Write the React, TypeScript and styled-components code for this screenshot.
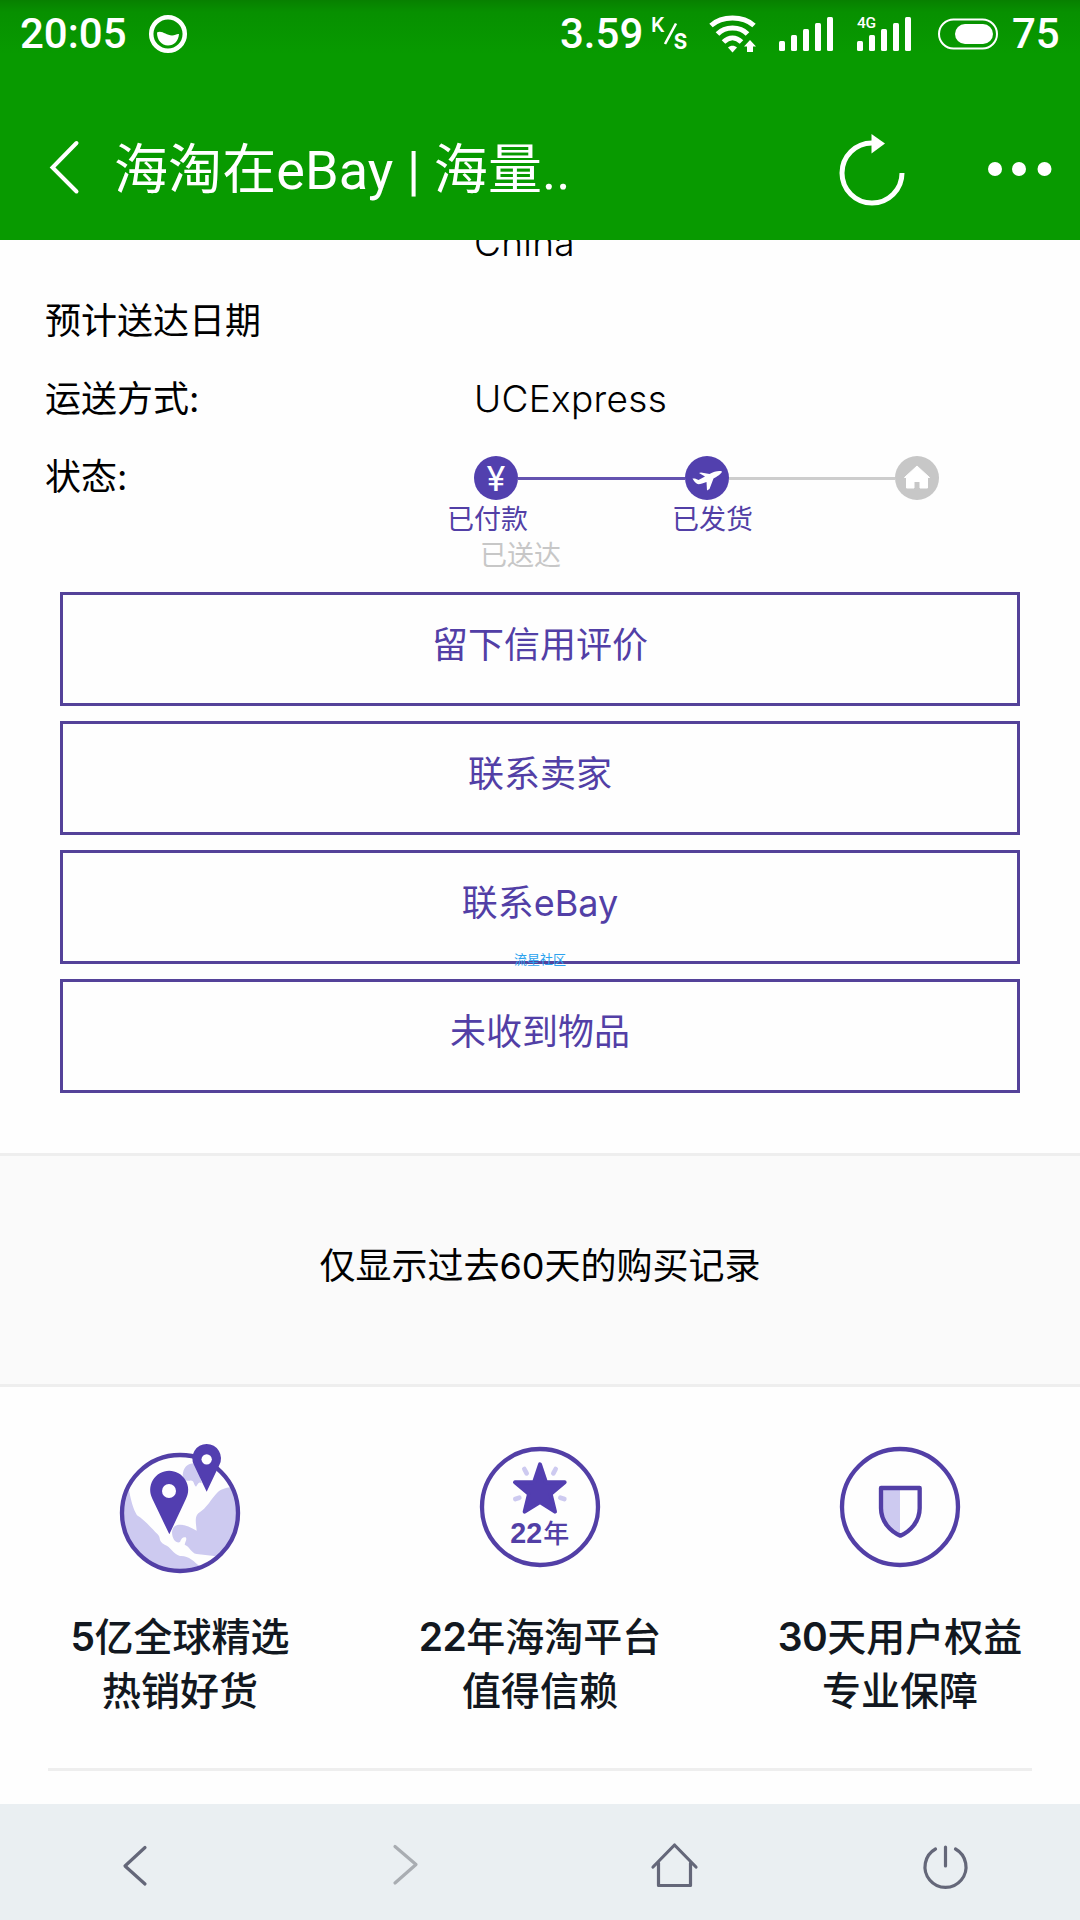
import React from 'react';
import styled, { createGlobalStyle } from 'styled-components';

const purple = '#523fa6';
const lilac = '#cdcaf0';
const cjk = "'Noto Sans CJK SC', sans-serif";

const GlobalStyle = createGlobalStyle`
  * {
    box-sizing: border-box;
  }

  body {
    margin: 0;
    background: #fefefe;
    color: #000;
    font-family: Inter, ${cjk};
  }
`;

const Screen = styled.div`
  position: relative;
  display: flex;
  flex-direction: column;
  width: 1080px;
  height: 1920px;
  overflow: hidden;
`;

const Header = styled.header`
  flex: none;
  height: 240px;
  color: #fff;
  font-family: Roboto, ${cjk};
  background: linear-gradient(#078000 0, #079000 12px, #089a00 54px);
`;

const StatusBar = styled.div`
  display: flex;
  align-items: center;
  height: 67px;
  padding: 0 20px;
  font-size: 42px;
  font-weight: 500;
  line-height: 67px;

  svg {
    flex: none;
    overflow: visible;
  }
`;

const Clock = styled.span`
  width: 128px;
`;

const Speed = styled.span`
  width: 92px;
  margin-left: auto;
`;

const Indicators = styled.div`
  display: flex;
  align-items: center;
  gap: 22px;
  margin: 0 25px 0 19px;
`;

const Level = styled.span`
  width: 48px;
  margin-left: 14px;
`;

const NavBar = styled.div`
  display: flex;
  align-items: center;
  height: 173px;
  padding: 27px 26px 0 46px;
`;

const Title = styled.h1`
  flex: 1;
  margin: 7px 0 0 30px;
  font-size: 54px;
  font-weight: 400;
  line-height: 64px;
  letter-spacing: 0.1px;
  white-space: pre;
`;

const NavActions = styled.div`
  display: flex;
  align-items: center;
  gap: 79px;
  padding-top: 4px;
`;

const Details = styled.main`
  flex: none;
  height: 913px;
  overflow: hidden;
`;

const Row = styled.div<{ $clipped?: boolean }>`
  display: grid;
  grid-template-columns: 429px 1fr;
  align-items: center;
  height: 78px;
  margin-top: ${({ $clipped }) => ($clipped ? '-37px' : '0')};
  padding: 1px 0 0 45px;
  font-size: 36px;
  font-weight: 400;
  line-height: 44px;
`;

const Value = styled.span`
  font-size: 37px;
  font-weight: 350;
  letter-spacing: 0.3px;
`;

const Track = styled.div`
  display: flex;
  align-items: center;
  width: 465px;
  padding-top: 3px;
`;

const Step = styled.div<{ $done?: boolean }>`
  display: flex;
  align-items: center;
  justify-content: center;
  flex: none;
  width: 44px;
  height: 44px;
  border-radius: 50%;
  background: ${({ $done }) => ($done ? '#5240ae' : '#c7c7c7')};
  color: #fff;
  font-family: Roboto, sans-serif;
  font-size: 35px;
  font-weight: 400;
`;

const Yen = styled.span`
  padding-top: 4px;
`;

const Line = styled.div<{ $done?: boolean }>`
  flex: 1;
  height: 3px;
  background: ${({ $done }) => ($done ? '#6453b0' : '#cdcdcd')};
`;

const StepLabels = styled.div`
  display: flex;
  flex-wrap: wrap;
  align-content: flex-start;
  width: 320px;
  height: 90px;
  margin: -13px 0 0 447px;
  font-size: 27px;
  font-weight: 400;
  line-height: 36px;
`;

const StepLabel = styled.span<{ $pending?: boolean }>`
  width: ${({ $pending }) => ($pending ? '100%' : '225px')};
  padding-left: ${({ $pending }) => ($pending ? '33px' : '0')};
  color: ${({ $pending }) => ($pending ? '#c7c7c7' : purple)};

  &:nth-child(2) {
    width: 95px;
  }
`;

const Actions = styled.div`
  display: flex;
  flex-direction: column;
  gap: 15px;
  padding: 0 60px;
`;

const ActionButton = styled.button`
  height: 114px;
  padding: 0 0 14px;
  border: 3px solid #544299;
  background: transparent;
  color: ${purple};
  font-family: Inter, ${cjk};
  font-size: 36px;
  font-weight: 400;
`;

const Watermark = styled.span`
  position: absolute;
  top: 949px;
  left: 514px;
  font-family: ${cjk};
  font-size: 13px;
  line-height: 20px;
  color: #2ba2ee;
`;

const Notice = styled.section`
  display: flex;
  flex: none;
  align-items: center;
  justify-content: center;
  height: 234px;
  padding-bottom: 14px;
  border: solid #eee;
  border-width: 3px 0;
  background: #fafafa;
  font-size: 36px;
  font-weight: 400;
`;

const Features = styled.section`
  display: grid;
  flex: none;
  grid-template-columns: repeat(3, 360px);
  height: 381px;
  padding-top: 54px;
`;

const Feature = styled.div`
  display: flex;
  flex-direction: column;
  align-items: center;
  color: #121820;
  font-size: 39px;
  font-weight: 500;
  line-height: 54px;

  svg {
    margin-bottom: 36px;
  }

  b {
    font-weight: 600;
    letter-spacing: -0.5px;
  }
`;

const Divider = styled.hr`
  flex: none;
  width: 984px;
  height: 3px;
  margin: 0 auto 33px;
  border: 0;
  background: #eee;
`;

const TabBar = styled.nav`
  display: grid;
  flex: 1;
  grid-template-columns: repeat(4, 1fr);
  align-items: center;
  justify-items: center;
  padding-top: 10px;
  background: #eaeff2;
`;

const SignalBars: React.FC<{ label?: string }> = ({ label }) => (
  <svg width="56" height="40" viewBox="0 0 56 40" fill="#fff">
    {[0, 1, 2, 3, 4].map((i) => (
      <rect key={i} x={i * 12} y={27 - i * 6} width="6" height={10 + i * 6} rx="1.5" />
    ))}
    {label && (
      <text x="0" y="14" fontFamily="Roboto" fontSize="15.5" fontWeight="500" textLength="19">
        {label}
      </text>
    )}
  </svg>
);

const WaterIcon = () => (
  <svg width="40" height="40" viewBox="0 0 40 40">
    <circle cx="20" cy="20" r="16.8" fill="none" stroke="#fff" strokeWidth="4.5" />
    <path d="M9 18.5C14 16 18 21.5 24 21.5C27 21.5 29 19.5 31 20C30.5 27 26 31.5 20 31.5C13.5 31.5 9 26 9 18.5Z" fill="#fff" />
  </svg>
);

const SpeedUnit = () => (
  <svg width="38" height="40" viewBox="0 0 38 40" fill="#fff">
    <text x="-1" y="18" fontFamily="Roboto" fontSize="21" fontWeight="500">K</text>
    <path d="M13 30L24 9.500" stroke="#fff" strokeWidth="2.600" />
    <text x="21.500" y="35" fontFamily="Roboto" fontSize="29" fontWeight="500" textLength="14" lengthAdjust="spacingAndGlyphs">s</text>
  </svg>
);

const WifiIcon = () => (
  <svg width="48" height="40" viewBox="0 0 48 40" fill="none" stroke="#fff" strokeWidth="5">
    <path d="M2 11.500C13 1.500 34 1.500 45 11.500" />
    <path d="M8.500 20C16 12 31 12 38.500 20" />
    <path d="M14.500 28C20 22.500 27 22.500 32.500 28" />
    <path d="M19 33.500C21.500 31 25.500 31 28 33.500L23.500 38.500Z" fill="#fff" stroke="none" />
    <path d="M41 26L47 32.500H44V38H38V32.500H35Z" fill="#fff" stroke="none" />
  </svg>
);

const BatteryIcon = () => (
  <svg width="60" height="32" viewBox="0 0 60 32">
    <rect x="1" y="1.500" width="58" height="29" rx="14.500" fill="none" stroke="#fff" strokeWidth="2" />
    <rect x="17" y="6" width="38" height="20" rx="10" fill="#fff" />
  </svg>
);

const BackIcon = () => (
  <svg width="38" height="60" viewBox="0 0 38 60" fill="none" stroke="#fff" strokeWidth="4" strokeLinecap="round">
    <path d="M30.500 6L6.500 30.500L30.500 54.500" />
  </svg>
);

const ReloadIcon = () => (
  <svg width="70" height="86" viewBox="0 0 70 86">
    <path d="M35 17A30 30 0 1 0 65 47" fill="none" stroke="#fff" strokeWidth="5" />
    <path d="M34.500 8L48 17.500L34.500 27.500Z" fill="#fff" />
  </svg>
);

const MoreIcon = () => (
  <svg width="68" height="20" viewBox="0 0 68 20" fill="#fff">
    <circle cx="9" cy="10" r="7" />
    <circle cx="33" cy="10" r="7" />
    <circle cx="58.500" cy="10" r="7" />
  </svg>
);

const PlaneIcon = () => (
  <svg width="44" height="44" viewBox="0 0 44 44" fill="#fff">
    <path d="M37 15.500C36.500 18 32 20.500 28.500 22.500L24.500 33L22 34.500L21.500 26C18 27.500 14 28.500 12.500 28C10.500 27 8 24 7.500 22.500L10 22.500L13.500 24L20 20.500L14 17L16 16.500L24.500 18C29 15.500 34 14.500 37 15.500Z" />
  </svg>
);

const ArrivedIcon = () => (
  <svg width="44" height="44" viewBox="0 0 44 44" fill="#fff" stroke="#fff" strokeLinejoin="round">
    <path d="M22 10L34.500 21.500H32.500V32H25V25.500H19V32H11.500V21.500H9.500Z" />
  </svg>
);

const badge = { width: 122, height: 133, viewBox: '237 63 366 399' };

const GlobeIcon = () => (
  <svg {...badge}>
    <clipPath id="globe">
      <circle cx="420" cy="279" r="170" />
    </clipPath>
    <g clipPath="url(#globe)" fill={lilac}>
      <path d="M240 205H266C272 240 280 268 291 286C315 301 335 325 353 343C365 355 352 362 374 374C392 380 400 402 420 408C445 406 462 424 480 440L420 480L240 450Z" />
      <path d="M600 200C560 201 545 206 533 217C512 238 502 264 475 280C463 292 468 310 470 332C450 320 430 311 412 315C398 318 393 335 398 350C402 364 412 370 420 366C424 356 428 350 437 352C442 358 436 364 434 374C450 380 452 398 470 402L522 408L600 420Z" />
      <path d="M428 165C430 140 445 127 470 130L485 190C475 182 474 193 468 200C460 195 464 180 450 182C440 183 432 184 428 165Z" />
    </g>
    <circle cx="420" cy="279" r="174" fill="none" stroke={purple} strokeWidth="13" />
    <path d="M388 343L337 236A57 57 0 1 1 438 236Z" fill="#523eb0" />
    <circle cx="387" cy="213" r="21" fill="#fff" />
    <path d="M500 215L462 135A43 43 0 1 1 538 135Z" fill="#523eb0" />
    <circle cx="500" cy="118" r="15.500" fill="#fff" />
  </svg>
);

const StarIcon = () => (
  <svg {...badge}>
    <circle cx="420" cy="261" r="174" fill="none" stroke={purple} strokeWidth="13" />
    <path d="M373 147L380 160M467 147L460 160M346 237L358 233M481 233L493 237" stroke={lilac} strokeWidth="14" strokeLinecap="round" />
    <path
      d="M420 133L438 187H494L452 222L465 275L420 246L374 275L387 222L345 187H402Z"
      fill="#523eb0"
      stroke="#523eb0"
      strokeWidth="12"
      strokeLinejoin="round"
    />
    <text x="331" y="370" fontFamily="Liberation Sans" fontSize="86" fontWeight="700" fill={purple}>22</text>
    <text x="430" y="368" fontFamily="Noto Sans CJK SC" fontSize="78" fontWeight="500" fill={purple}>年</text>
  </svg>
);

const ShieldIcon = () => (
  <svg {...badge}>
    <circle cx="420" cy="261" r="174" fill="none" stroke={purple} strokeWidth="13" />
    <path d="M363 204H420V347C392 335 363 305 363 262Z" fill={lilac} />
    <path d="M363 204H479V265C479 305 450 335 421 347C392 335 363 305 363 265Z" fill="none" stroke={purple} strokeWidth="13" strokeLinejoin="round" />
  </svg>
);

const TabIcon = styled.svg.attrs({ width: 50, height: 50, viewBox: '0 0 50 50' })<{ $dim?: boolean }>`
  fill: none;
  stroke: ${({ $dim }) => ($dim ? '#a9adb2' : '#646779')};
  stroke-width: 3.2;
  stroke-linecap: round;
  stroke-linejoin: round;
`;

const actions = ['留下信用评价', '联系卖家', '联系eBay', '未收到物品'];

const features = [
  { icon: <GlobeIcon />, count: '5', title: '亿全球精选', text: '热销好货' },
  { icon: <StarIcon />, count: '22', title: '年海淘平台', text: '值得信赖' },
  { icon: <ShieldIcon />, count: '30', title: '天用户权益', text: '专业保障' },
];

const App: React.FC = () => (
  <>
    <GlobalStyle />
    <Screen>
      <Header>
        <StatusBar>
          <Clock>20:05</Clock>
          <WaterIcon />
          <Speed>3.59</Speed>
          <SpeedUnit />
          <Indicators>
            <WifiIcon />
            <SignalBars />
            <SignalBars label="4G" />
          </Indicators>
          <BatteryIcon />
          <Level>75</Level>
        </StatusBar>
        <NavBar>
          <BackIcon />
          <Title>海淘在eBay | 海量..</Title>
          <NavActions>
            <ReloadIcon />
            <MoreIcon />
          </NavActions>
        </NavBar>
      </Header>

      <Details>
        <Row $clipped>
          <span />
          <Value>China</Value>
        </Row>
        <Row>
          <span>预计送达日期</span>
        </Row>
        <Row>
          <span>运送方式:</span>
          <Value>UCExpress</Value>
        </Row>
        <Row>
          <span>状态:</span>
          <Track>
            <Step $done>
              <Yen>¥</Yen>
            </Step>
            <Line $done />
            <Step $done>
              <PlaneIcon />
            </Step>
            <Line />
            <Step>
              <ArrivedIcon />
            </Step>
          </Track>
        </Row>
        <StepLabels>
          <StepLabel>已付款</StepLabel>
          <StepLabel>已发货</StepLabel>
          <StepLabel $pending>已送达</StepLabel>
        </StepLabels>
        <Actions>
          {actions.map((label) => (
            <ActionButton key={label}>{label}</ActionButton>
          ))}
        </Actions>
      </Details>

      <Notice>仅显示过去60天的购买记录</Notice>

      <Features>
        {features.map(({ icon, count, title, text }) => (
          <Feature key={title}>
            {icon}
            <div>
              <b>{count}</b>
              {title}
            </div>
            <div>{text}</div>
          </Feature>
        ))}
      </Features>
      <Divider />

      <TabBar>
        <TabIcon>
          <path d="M35 5.500L15 24L35 42" />
        </TabIcon>
        <TabIcon $dim>
          <path d="M15 4.500L36 22.500L15 41" />
        </TabIcon>
        <TabIcon>
          <path d="M3 25L24.500 3L46 25M8.500 21V43.500H40.500V21" />
        </TabIcon>
        <TabIcon>
          <path d="M15.500 7A20.500 20.500 0 1 0 35.500 7" />
          <path d="M25.500 5V24" />
        </TabIcon>
      </TabBar>

      <Watermark>流星社区</Watermark>
    </Screen>
  </>
);

export default App;
